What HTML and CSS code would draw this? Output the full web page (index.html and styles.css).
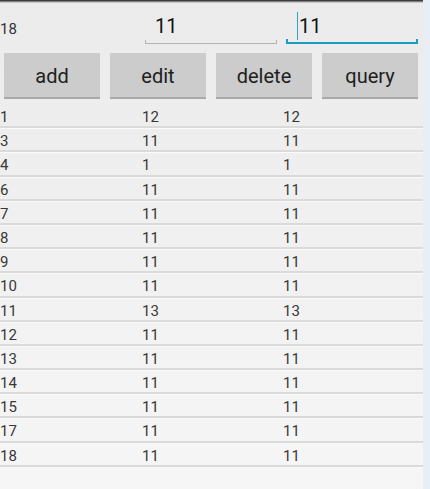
FILE: index.html
```html
<!DOCTYPE html>
<html>
<head>
<meta charset="utf-8">
<link rel="stylesheet" href="styles.css">
</head>
<body>
<div class="screen">
  <div class="main">
    <div class="topshadow"></div>
    <div class="header">
      <div class="label">18</div>
      <div class="edit">
        <div class="edit-text">11</div>
        <div class="edit-line"></div>
      </div>
      <div class="edit focused">
        <div class="edit-text"><span class="cursor"></span>11</div>
        <div class="edit-line"></div>
      </div>
    </div>
    <div class="buttons">
      <div class="btn">add</div>
      <div class="btn">edit</div>
      <div class="btn">delete</div>
      <div class="btn">query</div>
    </div>
    <div class="list">
      <div class="row"><span>1</span><span>12</span><span>12</span></div>
      <div class="row"><span>3</span><span>11</span><span>11</span></div>
      <div class="row"><span>4</span><span>1</span><span>1</span></div>
      <div class="row"><span>6</span><span>11</span><span>11</span></div>
      <div class="row"><span>7</span><span>11</span><span>11</span></div>
      <div class="row"><span>8</span><span>11</span><span>11</span></div>
      <div class="row"><span>9</span><span>11</span><span>11</span></div>
      <div class="row"><span>10</span><span>11</span><span>11</span></div>
      <div class="row"><span>11</span><span>13</span><span>13</span></div>
      <div class="row"><span>12</span><span>11</span><span>11</span></div>
      <div class="row"><span>13</span><span>11</span><span>11</span></div>
      <div class="row"><span>14</span><span>11</span><span>11</span></div>
      <div class="row"><span>15</span><span>11</span><span>11</span></div>
      <div class="row"><span>17</span><span>11</span><span>11</span></div>
      <div class="row"><span>18</span><span>11</span><span>11</span></div>
    </div>
  </div>
  <div class="strip"></div>
</div>
</body>
</html>
```

FILE: styles.css
```css
html, body {
  margin: 0;
  padding: 0;
}
body {
  width: 430px;
  height: 489px;
  overflow: hidden;
  font-family: Roboto, "Noto Sans", sans-serif;
  background: #e9eef5;
}
.screen {
  display: flex;
  height: 489px;
}
.main {
  width: 423px;
  height: 489px;
  background: linear-gradient(#ebebeb, #f6f6f6);
  display: flex;
  flex-direction: column;
}
.strip {
  width: 7px;
  background: #e8eef6;
}
.topshadow {
  height: 3px;
  flex: none;
  background: linear-gradient(#1c1c1c, #6a6a6a 40%, rgba(200,200,200,0) 100%);
}
.header {
  display: flex;
  height: 47px;
  flex: none;
  align-items: flex-start;
}
.label {
  width: 145px;
  font-size: 15px;
  color: #333;
  padding-top: 17px;
  line-height: 18px;
}
.edit {
  width: 132px;
  margin-top: 9px;
}
.edit + .edit {
  margin-left: 9px;
}
.edit-text {
  height: 28px;
  font-size: 20px;
  line-height: 28px;
  color: #111;
  padding-left: 10px;
  display: flex;
  align-items: center;
}
.edit-line {
  height: 3px;
  border: 1px solid #b3b3b3;
  border-top: none;
}
.focused .edit-text {
  padding-left: 11px;
}
.focused .edit-line {
  height: 3px;
  border: 2px solid #1f9cc4;
  border-top: none;
  margin-top: -1px;
}
.cursor {
  display: inline-block;
  width: 1px;
  height: 28px;
  background: #2aa7c8;
  margin-right: 1px;
}
.buttons {
  display: flex;
  flex: none;
  gap: 10px;
  padding-left: 4px;
  margin-top: 3px;
}
.btn {
  width: 96px;
  height: 42px;
  padding-top: 2px;
  background: #cccccc;
  border-bottom: 2px solid #a9a9a9;
  box-sizing: content-box;
  display: flex;
  align-items: center;
  justify-content: center;
  font-size: 20px;
  color: #1e1e1e;
}
.list {
  flex: none;
  margin-top: 5px;
}
.row {
  display: grid;
  grid-template-columns: 142px 141px 140px;
  height: 22.2px;
  box-sizing: content-box;
  padding-top: 0;
  line-height: 27px;
  overflow: hidden;
  font-size: 15px;
  color: #383838;
  border-bottom: 2px solid #dadada;
  box-shadow: 0 1px 0 #fafafa;
}
```
